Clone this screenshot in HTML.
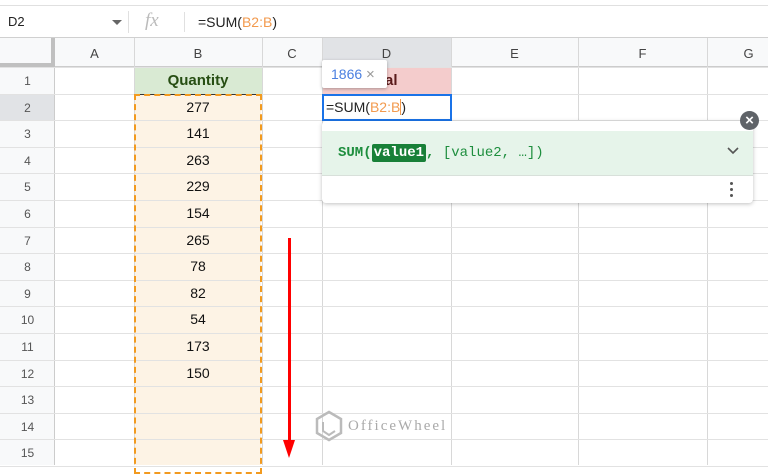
<!DOCTYPE html><html><head><style>
*{margin:0;padding:0;box-sizing:border-box}
body{width:768px;height:465px;overflow:hidden;background:#fff;font-family:"Liberation Sans",Arial,sans-serif;position:relative}
.a{position:absolute}
.hl{position:absolute;height:1px;background:#e2e2e2}
.vl{position:absolute;width:1px;background:#e2e2e2}
.rh{position:absolute;left:0;width:55px;text-align:center;font-size:12px;color:#555}
.num{position:absolute;left:134px;width:128px;text-align:center;font-size:14px;color:#111}
</style></head><body>
<div class="a" style="left:0;top:0;width:768px;height:6px;background:#fff;border-bottom:1px solid #e0e0e0"></div>
<div class="a" style="left:0;top:7px;width:768px;height:31px;border-bottom:1px solid #d0d0d0"></div>
<div class="a" style="left:8px;top:14px;font-size:13px;color:#222">D2</div>
<div class="a" style="left:112px;top:20px;width:0;height:0;border-left:5px solid transparent;border-right:5px solid transparent;border-top:5px solid #666"></div>
<div class="a" style="left:128px;top:11px;width:1px;height:22px;background:#e0e0e0"></div>
<div class="a" style="left:145px;top:10px;font-size:19px;font-style:italic;font-family:'Liberation Serif',serif;color:#bbb">fx</div>
<div class="a" style="left:184px;top:12px;width:1px;height:20px;background:#e0e0e0"></div>
<div class="a" style="left:198px;top:14px;font-size:14px;color:#222">=SUM(<span style="color:#f29a4e">B2:B</span>)</div>
<div class="a" style="left:0;top:38px;width:768px;height:29px;background:#f8f9fa;border-bottom:1px solid #ccc"></div>
<div class="a" style="left:322px;top:38px;width:129px;height:29px;background:#e1e3e6"></div>
<div class="a" style="left:0;top:38px;width:55px;height:29px;border-right:4px solid #c0c0c0;border-bottom:4px solid #c0c0c0;background:#f8f9fa"></div>
<div class="a" style="left:0;top:67px;width:55px;height:398px;background:#f8f9fa;border-right:1px solid #ccc"></div>
<div class="a" style="left:0;top:94px;width:55px;height:27px;background:#e1e3e6;border-right:1px solid #ccc"></div>
<div class="a" style="left:134px;top:67px;width:128px;height:27px;background:#d9ead3"></div>
<div class="a" style="left:135px;top:94px;width:126px;height:371px;background:#fdf3e5"></div>
<div class="a" style="left:322px;top:67px;width:129px;height:27px;background:#f4cccc"></div>
<div id="g"></div>
<div class="a" style="left:134px;top:67px;width:128px;height:28px;border-bottom:1px solid #333"></div>
<div class="a" style="left:134px;top:72px;width:128px;text-align:center;font-size:15px;font-weight:bold;color:#274e13">Quantity</div>
<div class="a" style="left:134px;top:94px;width:128px;height:380px;border:2px dashed #f29a1f"></div>
<div class="a" style="left:380px;top:72px;font-size:15px;font-weight:bold;color:#5a1a1a">tal</div>
<div class="a" style="left:322px;top:60px;width:65px;height:28px;background:#fff;box-shadow:0 1px 3px rgba(0,0,0,.3);border-radius:2px"></div>
<div class="a" style="left:331px;top:66px;font-size:14px;color:#4a7fe0">1866 <span style="color:#999;font-size:15px">×</span></div>
<div class="a" style="left:322px;top:94px;width:130px;height:27px;border:2px solid #1a73e8;background:#fff"></div>
<div class="a" style="left:326px;top:99px;font-size:14px;color:#222">=SUM(<span style="color:#f29a4e">B2:B</span><span style="border-left:1px solid #f29a4e"></span>)</div>
<div class="a" style="left:322px;top:121px;width:431px;height:82px;background:#fff;box-shadow:0 1px 4px rgba(0,0,0,.25);border-radius:4px"></div>
<div class="a" style="left:322px;top:131px;width:431px;height:45px;background:#e6f4ea;border-bottom:1px solid #d8e0da"></div>
<div class="a" style="left:338px;top:145px;font-family:'Liberation Mono',monospace;font-size:14px;color:#1e8e3e;font-weight:bold">SUM(<span style="background:#188038;color:#fff;padding:1px 2px;border-radius:2px">value1</span>, <span style="font-weight:normal">[value2, …])</span></div>
<svg class="a" style="left:726px;top:146px" width="14" height="10"><path d="M2 2l5 5 5-5" stroke="#555" stroke-width="1.6" fill="none"/></svg>
<div class="a" style="left:730px;top:182px;width:3px;height:3px;background:#555;border-radius:50%;box-shadow:0 6px 0 #555,0 12px 0 #555"></div>
<div class="a" style="left:740px;top:111px;width:19px;height:19px;background:#5f6368;border-radius:50%;color:#fff;font-size:15px;line-height:19px;text-align:center;font-weight:bold">×</div>
<div class="a" style="left:288px;top:238px;width:3px;height:205px;background:#f00"></div>
<div class="a" style="left:283px;top:440px;width:0;height:0;border-left:6.5px solid transparent;border-right:6.5px solid transparent;border-top:18px solid #f00"></div>
<svg class="a" style="left:314px;top:410px" width="30" height="32"><path d="M15 2l12 7v14l-12 7-12-7V9z" stroke="#bbb" stroke-width="2.5" fill="none"/><path d="M9 12v9l6 4 6-4" stroke="#bbb" stroke-width="2" fill="none"/></svg>
<div class="a" style="left:348px;top:418px;font-size:15px;letter-spacing:2px;color:#aaa;font-family:'Liberation Serif',serif">OfficeWheel</div>
<script>
var h='';var cols=[55,134,262,322,451,578,707];var names=['A','B','C','D','E','F','G'];
for(var i=1;i<cols.length;i++)h+='<div class="vl" style="left:'+cols[i]+'px;top:38px;height:427px;background:#d8d8d8"></div>';
for(var r=0;r<=15;r++){var y=Math.round(67+r*26.6);h+='<div class="hl" style="left:0;top:'+y+'px;width:768px"></div>';
if(r<15)h+='<div class="rh" style="top:'+(y+7)+'px;height:14px">'+(r+1)+'</div>';}
for(var i=0;i<7;i++){var w=(cols[i+1]||790)-cols[i];h+='<div class="a" style="left:'+cols[i]+'px;top:46px;width:'+w+'px;text-align:center;font-size:13px;color:#444">'+names[i]+'</div>';}
document.getElementById('g').innerHTML=h;
var v=[277,141,263,229,154,265,78,82,54,173,150],n='';
for(var k=0;k<v.length;k++)n+='<div class="num" style="top:'+Math.round(67+(k+1)*26.6+5)+'px">'+v[k]+'</div>';
document.body.insertAdjacentHTML('beforeend',n);
</script>
</body></html>
